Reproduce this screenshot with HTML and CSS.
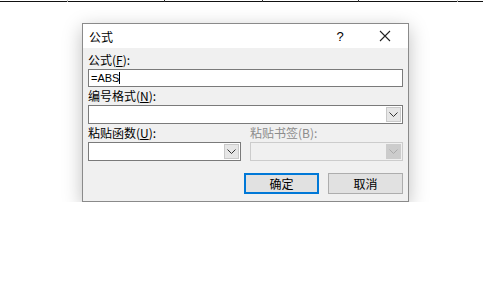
FILE: index.html
```html
<!DOCTYPE html>
<html lang="zh-CN">
<head>
    <meta charset="UTF-8">
    <title>公式</title>
    <link rel="stylesheet" href="styles.css">
</head>
<body>
    <div class="ruler">
        <span class="tick t1"></span>
        <span class="tick t2"></span>
        <span class="tick t3"></span>
        <span class="tick t4"></span>
        <span class="tick t5"></span>
    </div>

    <div class="dialog">
        <div class="titlebar">
            <span class="title">公式</span>
            <span class="help">?</span>
            <span class="close">
                <svg width="12" height="12" viewBox="0 0 12 12"><path d="M1 1 L11 11 M11 1 L1 11" stroke="#222" stroke-width="1.1" fill="none"/></svg>
            </span>
        </div>
        <div class="content">
            <div class="label">公式(<u>F</u>):</div>
            <div class="textbox">=ABS<span class="caret"></span></div>

            <div class="label">编号格式(<u>N</u>):</div>
            <div class="combo">
                <div class="combo-text"></div>
                <div class="arrow"><svg width="9" height="5" viewBox="0 0 9 5"><path d="M0.5 0.5 L4.5 4.5 L8.5 0.5" stroke="#333" fill="none"/></svg></div>
            </div>

            <div class="row">
                <div class="col">
                    <div class="label">粘贴函数(<u>U</u>):</div>
                    <div class="combo">
                        <div class="combo-text"></div>
                        <div class="arrow"><svg width="9" height="5" viewBox="0 0 9 5"><path d="M0.5 0.5 L4.5 4.5 L8.5 0.5" stroke="#333" fill="none"/></svg></div>
                    </div>
                </div>
                <div class="col">
                    <div class="label disabled">粘贴书签(B):</div>
                    <div class="combo off">
                        <div class="combo-text"></div>
                        <div class="arrow"><svg width="9" height="5" viewBox="0 0 9 5"><path d="M0.5 0.5 L4.5 4.5 L8.5 0.5" stroke="#aaa" fill="none"/></svg></div>
                    </div>
                </div>
            </div>

            <div class="buttons">
                <button class="btn primary">确定</button>
                <button class="btn">取消</button>
            </div>
        </div>
    </div>
</body>
</html>
```

FILE: styles.css
```css
body {
    margin: 0;
    background-color: #ffffff;
    font-family: "Noto Sans CJK SC", "Liberation Sans", sans-serif;
    font-size: 12px;
    color: #000;
}
.ruler {
    position: relative;
    height: 1px;
    border-bottom: 1px solid #111;
}
.tick {
    position: absolute;
    top: 0;
    width: 1px;
    height: 2px;
    background-color: #333;
}
.t1 { left: 67px; background-color: #bbb; }
.t2 { left: 164px; }
.t3 { left: 262px; }
.t4 { left: 358px; }
.t5 { left: 457px; background-color: #bbb; }

.dialog {
    width: 325px;
    margin: 21px 0 0 82px;
    border: 1px solid #8a8a8a;
    background-color: #f0f0f0;
    box-shadow: 0 5px 18px rgba(0, 0, 0, 0.25);
}
.titlebar {
    height: 24px;
    background-color: #ffffff;
    display: flex;
    align-items: center;
    padding-left: 6px;
}
.title {
    flex: 1;
    font-size: 12px;
}
.help {
    width: 30px;
    font-family: "Liberation Sans", sans-serif;
    font-size: 13px;
    text-align: center;
    margin-right: 15px;
}
.close {
    width: 30px;
    display: flex;
    justify-content: center;
    margin-right: 8px;
}
.content {
    padding: 4px 5px 7px 5px;
}
.label {
    height: 16px;
    line-height: 16px;
    font-size: 12px;
    margin-bottom: 1px;
}
.label u {
    text-decoration: underline;
}
.label.disabled {
    color: #8c8c8c;
}
.textbox {
    height: 16px;
    border: 1px solid #7a7a7a;
    background-color: #fff;
    font-family: "Liberation Sans", sans-serif;
    font-size: 11px;
    line-height: 16px;
    padding-left: 2px;
    margin-bottom: 1px;
}
.caret {
    display: inline-block;
    width: 1px;
    height: 12px;
    background-color: #000;
    vertical-align: -2px;
}
.combo {
    height: 15px;
    border: 1px solid #7a7a7a;
    background-color: #fff;
    display: flex;
    justify-content: flex-end;
    padding: 1px;
    margin-bottom: 1px;
}
.combo-text {
    flex: 1;
}
.arrow {
    width: 15px;
    background-color: #e6e6e6;
    border: 1px solid #c9c9c9;
    box-sizing: border-box;
    display: flex;
    align-items: center;
    justify-content: center;
}
.combo.off {
    border-color: #cccccc;
    background-color: #f0f0f0;
}
.combo.off .arrow {
    background-color: #cccccc;
    border-color: #cccccc;
}
.row {
    display: flex;
    gap: 9px;
}
.col {
    flex: 1;
}
.buttons {
    display: flex;
    justify-content: flex-end;
    gap: 9px;
    margin-top: 11px;
}
.btn {
    width: 75px;
    height: 21px;
    font-family: "Noto Sans CJK SC", sans-serif;
    font-size: 12px;
    background-color: #e1e1e1;
    border: 1px solid #adadad;
    padding: 0;
}
.btn.primary {
    border: 2px solid #0078d7;
}
```
